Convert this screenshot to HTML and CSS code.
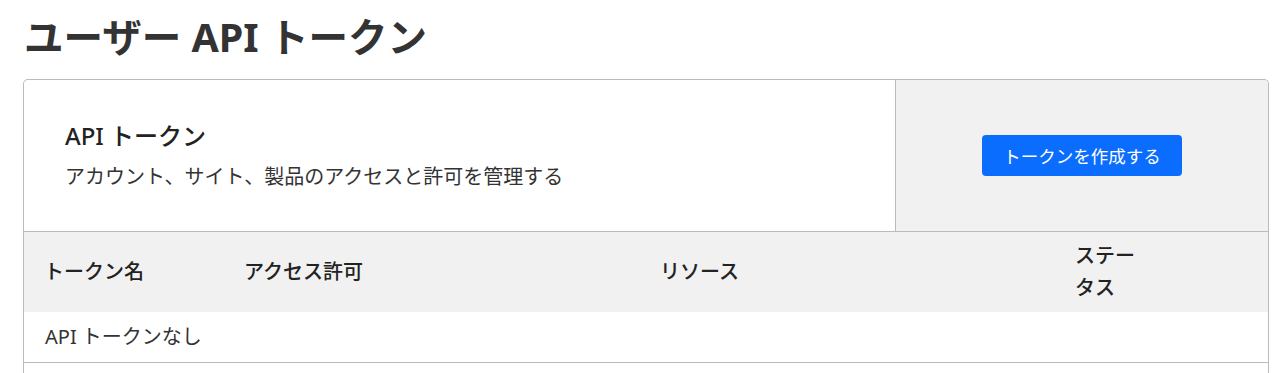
FILE: index.html
```html
<!DOCTYPE html>
<html lang="ja">

<head>
  <meta charset="UTF-8" />
  <meta name="viewport" content="width=device-width, initial-scale=1.0" />
  <title>ユーザー API トークン</title>
  <link rel="stylesheet" href="styles.css">
</head>

<body>
  <div class="page">
    <h1>ユーザー API トークン</h1>

    <div class="card">
      <div class="card-top">
        <div class="intro">
          <h2>API トークン</h2>
          <p>アカウント、サイト、製品のアクセスと許可を管理する</p>
        </div>
        <div class="actions">
          <button type="button" class="btn-primary">トークンを作成する</button>
        </div>
      </div>

      <table class="tokens">
        <colgroup>
          <col class="col-name" />
          <col class="col-access" />
          <col class="col-resource" />
          <col class="col-status" />
          <col />
        </colgroup>
        <thead>
          <tr>
            <th>トークン名</th>
            <th>アクセス許可</th>
            <th>リソース</th>
            <th>ステータス</th>
            <th></th>
          </tr>
        </thead>
        <tbody>
          <tr>
            <td colspan="5">API トークンなし</td>
          </tr>
        </tbody>
      </table>
      <div class="card-foot"></div>
    </div>
  </div>
</body>

</html>
```

FILE: styles.css
```css
body {
  margin: 0;
  font-family: "Noto Sans", "Noto Sans CJK JP", sans-serif;
  font-size: 20px;
  line-height: 1.6;
  color: #333;
  background: #fff;
}

.page {
  padding: 13px 16px 0 23px;
}

h1 {
  margin: 0 0 18px 1px;
  font-size: 39.5px;
  line-height: 48px;
  font-weight: 700;
  color: #333;
}

.card {
  border: 1px solid #bbb;
  border-bottom: none;
  border-radius: 5px 5px 0 0;
  overflow: hidden;
}

.card-top {
  display: grid;
  grid-template-columns: 1fr 373px;
  border-bottom: 1px solid #bbb;
}

.intro {
  padding: 37px 20px 38px 41px;
}

.intro h2 {
  margin: 0;
  font-size: 24px;
  line-height: 38px;
  font-weight: 500;
  color: #222;
}

.intro p {
  margin: 6px 0 0;
  font-size: 20px;
  line-height: 32px;
}

.actions {
  display: flex;
  align-items: center;
  justify-content: center;
  background-color: #f1f1f1;
  border-left: 1px solid #bbb;
}

.btn-primary {
  font-family: inherit;
  font-size: 17.5px;
  line-height: 26px;
  padding: 7.5px 21px;
  border: none;
  border-radius: 4px;
  background-color: #0b6dfd;
  color: #fff;
  cursor: pointer;
}

.tokens {
  width: 100%;
  border-collapse: collapse;
  table-layout: fixed;
}

.col-name {
  width: 200px;
}

.col-access {
  width: 416px;
}

.col-resource {
  width: 415px;
}

.col-status {
  width: 110px;
}

.tokens th {
  background-color: #f1f1f1;
  text-align: left;
  font-weight: 500;
  padding: 8px 22px 8px 20px;
  line-height: 32px;
  color: #222;
}

.tokens td {
  padding: 9px 22px 9px 21px;
  border-bottom: 1px solid #bbb;
}

.card-foot {
  height: 40px;
}
```
